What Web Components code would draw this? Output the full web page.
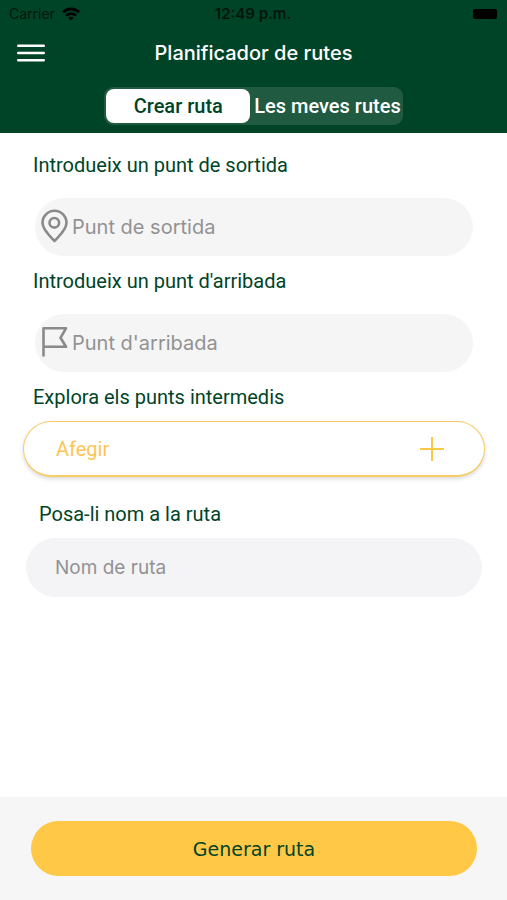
<!DOCTYPE html>
<html lang="ca">
<head>
<meta charset="utf-8">
<meta name="viewport" content="width=device-width, initial-scale=1">
<title>Planificador de rutes</title>
<style>
  body {
    --ui: Inter, "Liberation Sans", sans-serif;
    margin: 0;
    background: #fff;
    color: #004428;
    font-family: Roboto, "Liberation Sans", sans-serif;
    font-size: 20px;
    line-height: 24px;
  }
</style>
</head>
<body>
<route-planner></route-planner>

<script>
  class BaseElement extends HTMLElement {
    constructor() {
      super();
      this.attachShadow({ mode: "open" }).innerHTML =
        `<style>*, ::before, ::after { box-sizing: border-box; }
        button, input { font: inherit; color: inherit; border: 0; margin: 0; padding: 0; background: none; }
        svg { display: block; flex: none; }</style>` + this.render();
    }
    render() { return "<slot></slot>"; }
  }

  class StatusBar extends BaseElement {
    render() {
      return `
        <style>
          :host { display: grid; grid-template-columns: 1fr auto 1fr; align-items: center;
            height: 28px; padding: 0 10px 0 9px; color: #00150c; font: 14px/20px var(--ui); }
          .carrier { display: flex; align-items: center; gap: 7px; }
          .time { font-size: 15px; font-weight: 600; }
          .battery { justify-self: end; width: 24px; height: 10px; border-radius: 2px; background: #000; }
        </style>
        <span class="carrier"><span>Carrier</span>
          <svg width="18" height="14" viewBox="0 0 18 14" fill="none" stroke="#000" stroke-width="3" aria-hidden="true">
            <path d="M1 5.3C5.5 .9 12.500 .9 17 5.300"/>
            <path d="M4 8.600C6.800 5.900 11.200 5.900 14 8.600" stroke-width="2.600"/>
            <path d="M9 13.500 6.300 10.800C7.900 9.400 10.100 9.400 11.700 10.800Z" fill="#000" stroke="none"/>
          </svg></span>
        <span class="time">12:49 p.m.</span>
        <span class="battery"></span>`;
    }
  }

  class NavBar extends BaseElement {
    render() {
      return `
        <style>
          :host { display: grid; grid-template-columns: 32px 1fr 32px; align-items: center;
            height: 50px; padding: 0 15px; color: #fff; }
          button { width: 32px; height: 32px; display: grid; place-items: center; }
          h1 { margin: 0; text-align: center; font: 500 20px/24px var(--ui); }
        </style>
        <button type="button" aria-label="Menú">
          <svg width="28" height="20" viewBox="0 0 28 20" stroke="#fff" stroke-width="2.400" stroke-linecap="round" aria-hidden="true">
            <path d="M1.200 2.700H26.800M1.200 10H26.800M1.200 17.300H26.800"/>
          </svg>
        </button>
        <h1><slot></slot></h1>`;
    }
  }

  class SegmentTabs extends BaseElement {
    render() {
      return `
        <style>
          :host { display: flex; width: fit-content; margin: 9px auto 8px; padding: 2px 1px 2px 2px;
            border-radius: 9px; background: #1f5a41; }
          button { height: 34px; min-width: 144px; padding: 0 1px 0 4px; border-radius: 8px;
            color: #fff; font-weight: 500; white-space: nowrap; }
          button[aria-selected="true"] { background: #fff; color: #004428; padding: 0; }
        </style>
        <div role="tablist" style="display: contents">
          <button type="button" role="tab" aria-selected="true">Crear ruta</button>
          <button type="button" role="tab" aria-selected="false">Les meves rutes</button>
        </div>`;
    }
  }

  class PointField extends BaseElement {
    render() {
      return `
        <style>
          :host { display: block; padding: 0 34px 0 33px; }
          label { display: block; }
          .box { display: flex; align-items: center; gap: 3px; height: 58px; margin: 21px 0 0 2px;
            padding: 0 24px 0 5px; border-radius: 29px; background: #f5f5f5; }
          input { flex: 1; min-width: 0; height: 100%; font-family: var(--ui); outline: 0; }
          input::placeholder { color: #929292; opacity: 1; }
        </style>
        <label for="point">${this.getAttribute("label")}</label>
        <div class="box"><slot></slot>
          <input id="point" type="text" placeholder="${this.getAttribute("placeholder")}"></div>`;
    }
  }

  class PointIcon extends BaseElement {
    render() {
      const shapes = {
        pin: `<path d="M14.500 32C10 27 2.500 21 2.500 13.800A12 12 0 0 1 26.500 13.800C26.500 21 19 27 14.500 32Z"/><circle cx="14.300" cy="13.800" r="4.800"/>`,
        flag: `<path d="M3.500 31.500V3.300H26L20.500 12.800L26 21.800H3.500"/>`
      };
      return `
        <style>:host { display: block; flex: none; }</style>
        <svg width="29" height="36" viewBox="0 0 29 36" fill="none" stroke="#8a8a8a" stroke-width="2.600" stroke-linejoin="round" aria-hidden="true">${shapes[this.getAttribute("name")]}</svg>`;
    }
  }

  class AddPoint extends BaseElement {
    render() {
      return `
        <style>
          :host { display: block; padding: 0 22px 0 23px; }
          p { margin: 0 10px 12px; }
          button { display: flex; align-items: center; justify-content: space-between; width: 100%; height: 56px;
            padding: 0 39px 0 32px; border: 1px solid #f8cd68; border-width: 1px 1px 2px; border-radius: 28px;
            background: #fff; color: #fdc554; box-shadow: 0 2px 4px rgba(0, 0, 0, .15); }
        </style>
        <p id="title">Explora els punts intermedis</p>
        <button type="button" aria-describedby="title"><span>Afegir</span>
          <svg width="26" height="26" viewBox="0 0 26 26" stroke="#fdc844" stroke-width="2" aria-hidden="true"><path d="M1 13H25M13 1V25"/></svg>
        </button>`;
    }
  }

  class NameField extends BaseElement {
    render() {
      return `
        <style>
          :host { display: block; padding: 0 25px 0 26px; }
          label { display: block; padding-left: 13px; }
          input { display: block; width: 100%; height: 59px; margin-top: 12px; padding: 0 29px;
            border-radius: 30px; background: #f4f4f7; font: 19px/24px var(--ui); outline: 0; }
          input::placeholder { color: #929292; opacity: 1; }
        </style>
        <label for="name">Posa-li nom a la ruta</label>
        <input id="name" type="text" placeholder="Nom de ruta">`;
    }
  }

  class ActionFooter extends BaseElement {
    render() {
      return `
        <style>
          :host { display: block; padding: 24px 30px 24px 31px; background: #f6f6f6; }
          button { display: block; width: 100%; height: 55px; border-radius: 28px; background: #ffc846;
            font: 19px/24px "DejaVu Sans", sans-serif; }
        </style>
        <button type="submit"><slot></slot></button>`;
    }
  }

  class RoutePlanner extends BaseElement {
    render() {
      return `
        <style>
          :host { display: flex; flex-direction: column; min-height: 100vh; }
          header { background: #004428; }
          main { flex: 1; display: flex; flex-direction: column; padding: 20px 0 32px; }
          point-field { margin-bottom: 13px; }
          add-point { margin-bottom: 25px; }
        </style>
        <header>
          <status-bar></status-bar>
          <nav-bar>Planificador de rutes</nav-bar>
          <segment-tabs></segment-tabs>
        </header>
        <main>
          <point-field label="Introdueix un punt de sortida" placeholder="Punt de sortida"><point-icon name="pin"></point-icon></point-field>
          <point-field label="Introdueix un punt d'arribada" placeholder="Punt d'arribada"><point-icon name="flag"></point-icon></point-field>
          <add-point></add-point>
          <name-field></name-field>
        </main>
        <action-footer>Generar ruta</action-footer>`;
    }
  }

  customElements.define("status-bar", StatusBar);
  customElements.define("nav-bar", NavBar);
  customElements.define("segment-tabs", SegmentTabs);
  customElements.define("point-icon", PointIcon);
  customElements.define("point-field", PointField);
  customElements.define("add-point", AddPoint);
  customElements.define("name-field", NameField);
  customElements.define("action-footer", ActionFooter);
  customElements.define("route-planner", RoutePlanner);
</script>
</body>
</html>
